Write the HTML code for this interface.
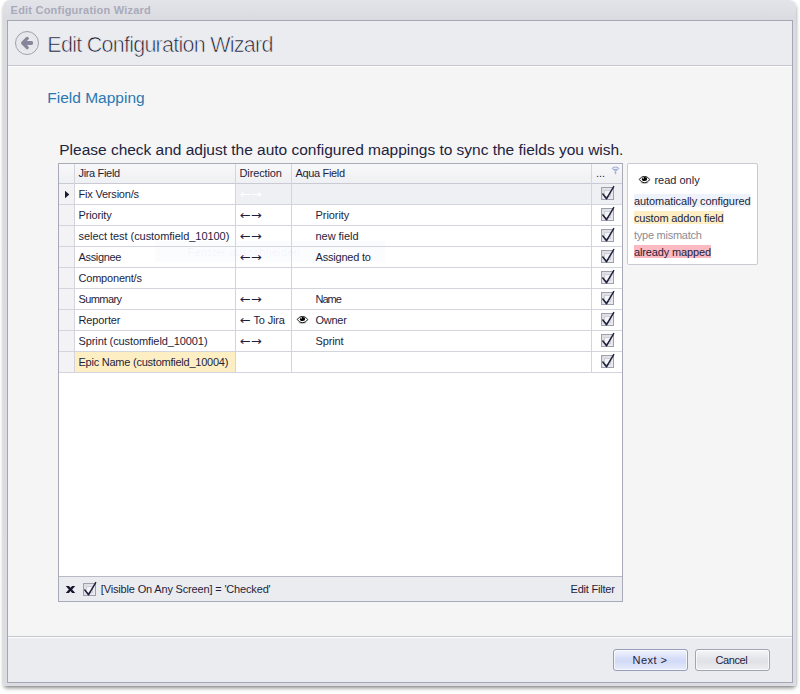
<!DOCTYPE html>
<html><head><meta charset="utf-8">
<style>
*{box-sizing:border-box;margin:0;padding:0}
html,body{width:800px;height:694px;background:#fff;overflow:hidden;font-family:"Liberation Sans","DejaVu Sans",sans-serif;color:#1e1e3c}
.abs{position:absolute}
#win{left:3px;top:0;width:793px;height:686px;background:linear-gradient(#e3e4e9 0,#dadbe1 20px,#dcdde3 100%);border-radius:7px 7px 3px 3px;box-shadow:0 3px 4px -1px rgba(0,0,0,.42),1px 1px 3px rgba(0,0,0,.13)}
#inner{left:7px;top:20px;width:786px;height:663px;border:1px solid #a5a6b5;background:#f5f5f5}
#hdr{left:8px;top:21px;width:784px;height:45px;background:#ebecf0;border-bottom:1px solid #c5c6cf;box-shadow:0 1px 0 #fdfdfd}
#ftr{left:8px;top:636px;width:784px;height:46px;background:#ebecf0;border-top:1px solid #c6c7cf;box-shadow:inset 0 1px 0 #fdfdfd}
#back{left:15px;top:31px;width:24px;height:24px;border-radius:50%;border:1px solid #9fa0ae;background:radial-gradient(circle at 50% 40%,#e9e9ed 0%,#e6e7eb 55%,#f1f1f4 100%)}
#grid{left:58px;top:163px;width:565px;height:439px;border:1px solid #a9aab8;background:#fff}
.t{position:absolute;font-size:11px;line-height:13px;white-space:nowrap;color:#1e1e3c}
.hl{position:absolute;background:#d3d4dc}
.vl{position:absolute;background:#d3d4dc;width:1px}
.cb{position:absolute;width:13px;height:13px;border:1px solid #9fa0ae;background:linear-gradient(135deg,#dcdde3,#ececf0)}
.cb i{position:absolute;left:2px;top:2px;right:2px;bottom:2px;border:1px solid #cdced7;background:linear-gradient(135deg,#f0f0f4,#ffffff)}
.ck{position:absolute;overflow:visible}
.ar{position:absolute;font-family:"DejaVu Sans",sans-serif;font-size:12px;line-height:14px;letter-spacing:0;white-space:nowrap;color:#20203a;transform:scaleX(1.08);transform-origin:0 50%}
.btn{position:absolute;width:75px;height:22px;border:1px solid #a3a4b2;border-radius:3px;font-size:11px;line-height:21px;text-align:center;color:#1e1e3c}
</style></head><body>
<div id="win" class="abs"></div>
<div id="inner" class="abs"></div>
<div id="hdr" class="abs"></div>
<div id="ftr" class="abs"></div>
<div id="back" class="abs"><svg width="24" height="24" viewBox="0 0 24 24" style="position:absolute;left:-1px;top:-1px"><path d="M12.2 7.4 L7.7 12 L12.2 16.6" fill="none" stroke="#85869a" stroke-width="3.3" stroke-linecap="round" stroke-linejoin="round"/><path d="M9.5 12 H16.3" fill="none" stroke="#85869a" stroke-width="3.8" stroke-linecap="round"/></svg></div>
<div id="grid" class="abs"></div>
<div class="abs" style="left:59px;top:164px;width:563px;height:19px;background:linear-gradient(#f8f8fa,#eff0f3)"></div>
<div class="abs" style="left:59px;top:184px;width:15px;height:188px;background:#f3f3f6"></div>
<div class="abs" style="left:236px;top:184px;width:386px;height:20px;background:#eff0f4"></div>
<div class="abs" style="left:75px;top:352px;width:160px;height:20px;background:#fdefc3"></div>
<div class="abs" style="left:155px;top:241px;width:230px;height:21px;background:rgba(120,140,220,0.028)"></div>
<div class="hl" style="left:59px;top:183px;width:563px;height:1px;background:#c9cad3"></div>
<div class="hl" style="left:59px;top:204px;width:563px;height:1px"></div>
<div class="hl" style="left:59px;top:225px;width:563px;height:1px"></div>
<div class="hl" style="left:59px;top:246px;width:563px;height:1px"></div>
<div class="hl" style="left:59px;top:267px;width:563px;height:1px"></div>
<div class="hl" style="left:59px;top:288px;width:563px;height:1px"></div>
<div class="hl" style="left:59px;top:309px;width:563px;height:1px"></div>
<div class="hl" style="left:59px;top:330px;width:563px;height:1px"></div>
<div class="hl" style="left:59px;top:351px;width:563px;height:1px"></div>
<div class="hl" style="left:59px;top:372px;width:563px;height:1px"></div>
<div class="vl" style="left:74px;top:164px;height:209px"></div>
<div class="vl" style="left:235px;top:164px;height:209px"></div>
<div class="vl" style="left:291px;top:164px;height:209px"></div>
<div class="vl" style="left:591px;top:164px;height:209px"></div>
<svg class="ck" width="5" height="9" viewBox="0 0 5 9" style="left:65px;top:190px"><path d="M0 0.7 L4.3 4.5 L0 8.3 Z" fill="#1a1a30"/></svg>
<span class="ar" style="left:240px;top:187px;color:#ffffff">←→</span>
<span class="ar" style="left:240px;top:208px;color:#20203a">←→</span>
<span class="ar" style="left:240px;top:229px;color:#20203a">←→</span>
<span class="ar" style="left:240px;top:250px;color:#20203a">←→</span>
<span class="ar" style="left:240px;top:292px;color:#20203a">←→</span>
<span class="ar" style="left:240px;top:334px;color:#20203a">←→</span>
<span class="ar" style="left:240px;top:313px">←</span>
<svg class="ck" width="13" height="9" viewBox="0 0 13 9" style="left:296px;top:316px"><path d="M2.6 6.5 C4.6 7.7 8.2 7.7 10.2 6.5" fill="none" stroke="#9a9a9a" stroke-width="0.7"/><path d="M1.3 3.4 C2.8 1.3 4.5 0.5 6.5 0.5 C8.5 0.5 10.3 1.5 11.7 3.6 C10.3 5.7 8.5 6.6 6.5 6.6 C4.5 6.6 2.8 5.6 1.3 3.4 Z" fill="#fff" stroke="#111" stroke-width="1"/><ellipse cx="6.5" cy="3.0" rx="2.7" ry="2.1" fill="#000"/><circle cx="5.2" cy="1.9" r="0.75" fill="#fff"/></svg>
<div class="cb" style="left:601px;top:187px"><i></i></div><svg class="ck" width="16" height="18" viewBox="0 0 16 18" style="left:600px;top:184px"><path d="M1.9 10.1 L3.0 9.0 L6.45 13.2 L13.4 1.7 L14.6 2.5 L7.0 15.4 L6.1 15.4 Z" fill="#20203a"/></svg>
<div class="cb" style="left:601px;top:208px"><i></i></div><svg class="ck" width="16" height="18" viewBox="0 0 16 18" style="left:600px;top:205px"><path d="M1.9 10.1 L3.0 9.0 L6.45 13.2 L13.4 1.7 L14.6 2.5 L7.0 15.4 L6.1 15.4 Z" fill="#20203a"/></svg>
<div class="cb" style="left:601px;top:229px"><i></i></div><svg class="ck" width="16" height="18" viewBox="0 0 16 18" style="left:600px;top:226px"><path d="M1.9 10.1 L3.0 9.0 L6.45 13.2 L13.4 1.7 L14.6 2.5 L7.0 15.4 L6.1 15.4 Z" fill="#20203a"/></svg>
<div class="cb" style="left:601px;top:250px"><i></i></div><svg class="ck" width="16" height="18" viewBox="0 0 16 18" style="left:600px;top:247px"><path d="M1.9 10.1 L3.0 9.0 L6.45 13.2 L13.4 1.7 L14.6 2.5 L7.0 15.4 L6.1 15.4 Z" fill="#20203a"/></svg>
<div class="cb" style="left:601px;top:271px"><i></i></div><svg class="ck" width="16" height="18" viewBox="0 0 16 18" style="left:600px;top:268px"><path d="M1.9 10.1 L3.0 9.0 L6.45 13.2 L13.4 1.7 L14.6 2.5 L7.0 15.4 L6.1 15.4 Z" fill="#20203a"/></svg>
<div class="cb" style="left:601px;top:292px"><i></i></div><svg class="ck" width="16" height="18" viewBox="0 0 16 18" style="left:600px;top:289px"><path d="M1.9 10.1 L3.0 9.0 L6.45 13.2 L13.4 1.7 L14.6 2.5 L7.0 15.4 L6.1 15.4 Z" fill="#20203a"/></svg>
<div class="cb" style="left:601px;top:313px"><i></i></div><svg class="ck" width="16" height="18" viewBox="0 0 16 18" style="left:600px;top:310px"><path d="M1.9 10.1 L3.0 9.0 L6.45 13.2 L13.4 1.7 L14.6 2.5 L7.0 15.4 L6.1 15.4 Z" fill="#20203a"/></svg>
<div class="cb" style="left:601px;top:334px"><i></i></div><svg class="ck" width="16" height="18" viewBox="0 0 16 18" style="left:600px;top:331px"><path d="M1.9 10.1 L3.0 9.0 L6.45 13.2 L13.4 1.7 L14.6 2.5 L7.0 15.4 L6.1 15.4 Z" fill="#20203a"/></svg>
<div class="cb" style="left:601px;top:355px"><i></i></div><svg class="ck" width="16" height="18" viewBox="0 0 16 18" style="left:600px;top:352px"><path d="M1.9 10.1 L3.0 9.0 L6.45 13.2 L13.4 1.7 L14.6 2.5 L7.0 15.4 L6.1 15.4 Z" fill="#20203a"/></svg>
<svg class="ck" width="9" height="9" viewBox="0 0 9 9" style="left:611px;top:166px"><path d="M1.4 2.6 L4.1 5.4 V8 H4.9 V5.4 L7.6 2.6 Z" fill="#b9c4e2" stroke="#93a2cc" stroke-width="0.5"/><ellipse cx="4.5" cy="2.3" rx="3.3" ry="1.2" fill="#eef2fb" stroke="#93a2cc" stroke-width="0.9"/></svg>
<div class="abs" style="left:59px;top:576px;width:563px;height:25px;background:#ebecf0;border-top:1px solid #b9bac6"></div>
<svg class="ck" width="11" height="9" viewBox="0 0 11 9" style="left:65px;top:585px"><path transform="translate(0.75,0.9)" d="M0 0 H3.2 L4.75 1.9 L6.3 0 H9.5 L6.4 3.5 L9.5 7 H6.3 L4.75 5.1 L3.2 7 H0 L3.1 3.5 Z" fill="#16162c"/></svg>
<div class="cb" style="left:83px;top:583px"><i></i></div><svg class="ck" width="16" height="18" viewBox="0 0 16 18" style="left:82px;top:580px"><path d="M1.9 10.1 L3.0 9.0 L6.45 13.2 L13.4 1.7 L14.6 2.5 L7.0 15.4 L6.1 15.4 Z" fill="#20203a"/></svg>
<div class="abs" style="left:627px;top:163px;width:131px;height:102px;background:#fff;border:1px solid #c9cad4;border-radius:2px"></div>
<div class="abs" style="left:634px;top:194px;width:117px;height:13px;background:#eef2fb"></div>
<div class="abs" style="left:634px;top:211px;width:90px;height:13px;background:#fdefc3"></div>
<div class="abs" style="left:634px;top:245px;width:77px;height:13px;background:#fbb9c2"></div>
<svg class="ck" width="13" height="9" viewBox="0 0 13 9" style="left:638px;top:176px"><path d="M2.6 6.5 C4.6 7.7 8.2 7.7 10.2 6.5" fill="none" stroke="#9a9a9a" stroke-width="0.7"/><path d="M1.3 3.4 C2.8 1.3 4.5 0.5 6.5 0.5 C8.5 0.5 10.3 1.5 11.7 3.6 C10.3 5.7 8.5 6.6 6.5 6.6 C4.5 6.6 2.8 5.6 1.3 3.4 Z" fill="#fff" stroke="#111" stroke-width="1"/><ellipse cx="6.5" cy="3.0" rx="2.7" ry="2.1" fill="#000"/><circle cx="5.2" cy="1.9" r="0.75" fill="#fff"/></svg>
<div class="btn" style="left:613px;top:649px;background:linear-gradient(#f2f4fd 0%,#d5dcf8 45%,#d3dbf7 60%,#e9edfb 100%);border-color:#979cb8;box-shadow:inset 0 0 0 1px rgba(255,255,255,.7)"></div>
<div class="btn" style="left:695px;top:649px;background:linear-gradient(#f6f6f8 0%,#e3e4e9 45%,#e1e2e7 60%,#eeeef2 100%);box-shadow:inset 0 0 0 1px rgba(255,255,255,.7)"></div>
<span class="t" id="title" style="left:10.6px;top:3.19px;font-size:11px;line-height:14px;letter-spacing:0.216px;color:#a9aab9;font-weight:bold;">Edit Configuration Wizard</span>
<span class="t" id="h1" style="left:47.3px;top:30.55px;font-size:21.5px;line-height:28px;letter-spacing:-0.734px;color:#15152e;-webkit-text-stroke:0.65px #ebecf0;">Edit Configuration Wizard</span>
<span class="t" id="h2" style="left:47.3px;top:87.63px;font-size:15.5px;line-height:20px;letter-spacing:0.0px;color:#2b78b0;">Field Mapping</span>
<span class="t" id="intro" style="left:59.3px;top:139.63px;font-size:15.5px;line-height:20px;letter-spacing:-0.014px;color:#232340;">Please check and adjust the auto configured mappings to sync the fields you wish.</span>
<span class="t" id="hj" style="left:78.5px;top:166.19px;font-size:11px;line-height:14px;letter-spacing:-0.333px;color:#1e1e3c;">Jira Field</span>
<span class="t" id="hd" style="left:239.5px;top:166.19px;font-size:11px;line-height:14px;letter-spacing:-0.125px;color:#1e1e3c;">Direction</span>
<span class="t" id="ha" style="left:295.5px;top:166.19px;font-size:11px;line-height:14px;letter-spacing:-0.333px;color:#1e1e3c;">Aqua Field</span>
<span class="t" id="hdots" style="left:596px;top:166.19px;font-size:11px;line-height:14px;letter-spacing:0.0px;color:#1e1e3c;">...</span>
<span class="t" id="j0" style="left:78.5px;top:187.19px;font-size:11px;line-height:14px;letter-spacing:-0.2px;color:#1e1e3c;">Fix Version/s</span>
<span class="t" id="j1" style="left:78.5px;top:208.19px;font-size:11px;line-height:14px;letter-spacing:-0.142px;color:#1e1e3c;">Priority</span>
<span class="t" id="a1" style="left:315.5px;top:208.19px;font-size:11px;line-height:14px;letter-spacing:-0.058px;color:#1e1e3c;">Priority</span>
<span class="t" id="j2" style="left:78.5px;top:229.19px;font-size:11px;line-height:14px;letter-spacing:-0.047px;color:#1e1e3c;">select test (customfield_10100)</span>
<span class="t" id="a2" style="left:315.5px;top:229.19px;font-size:11px;line-height:14px;letter-spacing:-0.05px;color:#1e1e3c;">new field</span>
<span class="t" id="j3" style="left:78.5px;top:250.19px;font-size:11px;line-height:14px;letter-spacing:-0.343px;color:#1e1e3c;">Assignee</span>
<span class="t" id="a3" style="left:315.5px;top:250.19px;font-size:11px;line-height:14px;letter-spacing:-0.2px;color:#1e1e3c;">Assigned to</span>
<span class="t" id="j4" style="left:78.5px;top:271.19px;font-size:11px;line-height:14px;letter-spacing:-0.2px;color:#1e1e3c;">Component/s</span>
<span class="t" id="j5" style="left:78.5px;top:292.19px;font-size:11px;line-height:14px;letter-spacing:-0.6px;color:#1e1e3c;">Summary</span>
<span class="t" id="a5" style="left:315.5px;top:292.19px;font-size:11px;line-height:14px;letter-spacing:-1.0px;color:#1e1e3c;">Name</span>
<span class="t" id="j6" style="left:78.5px;top:313.19px;font-size:11px;line-height:14px;letter-spacing:-0.115px;color:#1e1e3c;">Reporter</span>
<span class="t" id="a6" style="left:315.5px;top:313.19px;font-size:11px;line-height:14px;letter-spacing:-0.25px;color:#1e1e3c;">Owner</span>
<span class="t" id="j7" style="left:78.5px;top:334.19px;font-size:11px;line-height:14px;letter-spacing:-0.096px;color:#1e1e3c;">Sprint (customfield_10001)</span>
<span class="t" id="a7" style="left:315.5px;top:334.19px;font-size:11px;line-height:14px;letter-spacing:-0.16px;color:#1e1e3c;">Sprint</span>
<span class="t" id="j8" style="left:78.5px;top:355.19px;font-size:11px;line-height:14px;letter-spacing:-0.236px;color:#1e1e3c;">Epic Name (customfield_10004)</span>
<span class="t" id="tojira" style="left:253.5px;top:313.19px;font-size:11px;line-height:14px;letter-spacing:-0.167px;color:#1e1e3c;">To Jira</span>
<span class="t" id="ro" style="left:654.4px;top:173.19px;font-size:11px;line-height:14px;letter-spacing:0.0px;color:#1e1e3c;">read only</span>
<span class="t" id="l1" style="left:634px;top:194.19px;font-size:11px;line-height:14px;letter-spacing:-0.087px;color:#1e1e3c;">automatically configured</span>
<span class="t" id="l2" style="left:634px;top:211.19px;font-size:11px;line-height:14px;letter-spacing:-0.165px;color:#1e1e3c;">custom addon field</span>
<span class="t" id="l3" style="left:634px;top:228.19px;font-size:11px;line-height:14px;letter-spacing:-0.25px;color:#8c8c96;">type mismatch</span>
<span class="t" id="l4" style="left:634px;top:245.19px;font-size:11px;line-height:14px;letter-spacing:-0.139px;color:#1e1e3c;">already mapped</span>
<span class="t" id="flt" style="left:100.8px;top:582.19px;font-size:11px;line-height:14px;letter-spacing:-0.165px;color:#1e1e3c;">[Visible On Any Screen] = 'Checked'</span>
<span class="t" id="ef" style="left:570.5px;top:582.19px;font-size:11px;line-height:14px;letter-spacing:-0.2px;color:#1e1e3c;">Edit Filter</span>
<span class="t" id="next" style="left:632.6px;top:653.19px;font-size:11px;line-height:14px;letter-spacing:0.44px;color:#1e1e3c;">Next &gt;</span>
<span class="t" id="cancel" style="left:715.6px;top:653.19px;font-size:11px;line-height:14px;letter-spacing:-0.44px;color:#1e1e3c;">Cancel</span>
<span class="t" id="ghost" style="left:187.5px;top:245.19px;font-size:11px;line-height:14px;letter-spacing:0.211px;color:rgba(120,130,170,0.07);">Fenster ausschneiden</span>
</body></html>
